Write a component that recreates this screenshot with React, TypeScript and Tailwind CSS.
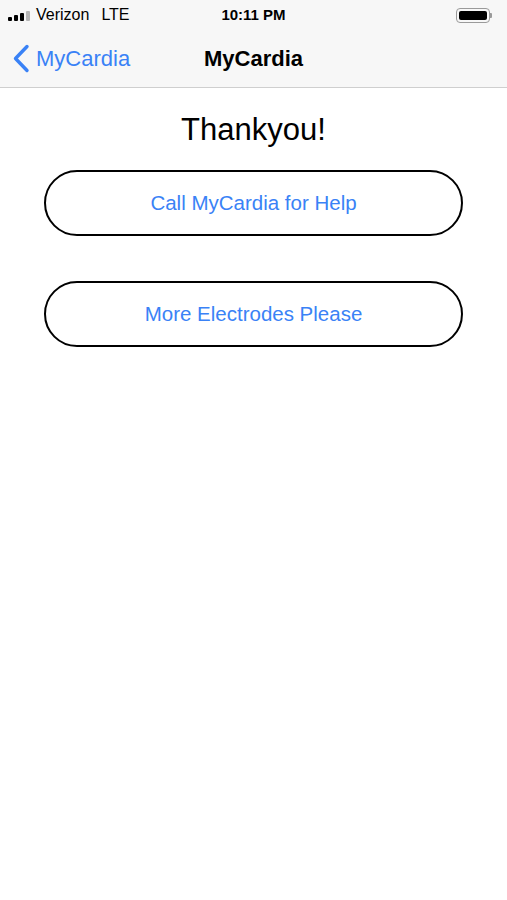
export default function App() {
  return (
    <div className="w-[507px] h-[900px] bg-white flex flex-col" style={{ fontFamily: '"Liberation Sans", Arial, sans-serif' }}>
      <div className="bg-[#f7f7f7] border-b border-[#cfcfcf]">
        <div className="h-[30px] relative flex items-center px-[8px]">
          <div className="flex items-end gap-[2px] h-[10px] mt-[1px]">
            <div className="w-[4px] h-[4px] bg-black rounded-[1px]" />
            <div className="w-[4px] h-[6px] bg-black rounded-[1px]" />
            <div className="w-[4px] h-[8px] bg-black rounded-[1px]" />
            <div className="w-[4px] h-[10px] bg-[#b5b5b5] rounded-[1px]" />
          </div>
          <span className="ml-[6px] text-[16px] text-black">Verizon</span>
          <span className="ml-[12px] text-[16px] text-black">LTE</span>
          <span className="absolute left-0 right-0 text-center text-[15px] font-bold text-black pointer-events-none">10:11 PM</span>
          <div className="ml-auto flex items-center mr-[7px]">
            <div className="w-[34px] h-[15px] rounded-[4px] border border-[#9a9a9a] p-[2px]">
              <div className="w-full h-full bg-black rounded-[2px]" />
            </div>
            <div className="w-[2px] h-[5px] bg-[#9a9a9a] rounded-r-[1px]" />
          </div>
        </div>
        <div className="h-[57px] relative flex items-center">
          <div className="flex items-center pl-[12px] text-[#3a82f6]">
            <svg width="18" height="29" viewBox="0 0 18 29" fill="none">
              <path d="M15 2.5 L3.5 14.5 L15 26.5" stroke="#3a82f6" strokeWidth="3.4" strokeLinecap="round" strokeLinejoin="round" />
            </svg>
            <span className="ml-[6px] text-[22px] text-[#3a82f6]">MyCardia</span>
          </div>
          <span className="absolute left-0 right-0 text-center text-[22px] font-bold text-black pointer-events-none">MyCardia</span>
        </div>
      </div>
      <div className="flex flex-col items-center pt-[22px]">
        <div className="text-[31px] text-black leading-[40px]">Thankyou!</div>
        <button className="mt-[20px] w-[419px] h-[66px] rounded-full border-2 border-black text-[20.5px] text-[#3a82f6] bg-white">
          Call MyCardia for Help
        </button>
        <button className="mt-[45px] w-[419px] h-[66px] rounded-full border-2 border-black text-[20.5px] text-[#3a82f6] bg-white">
          More Electrodes Please
        </button>
      </div>
    </div>
  );
}
